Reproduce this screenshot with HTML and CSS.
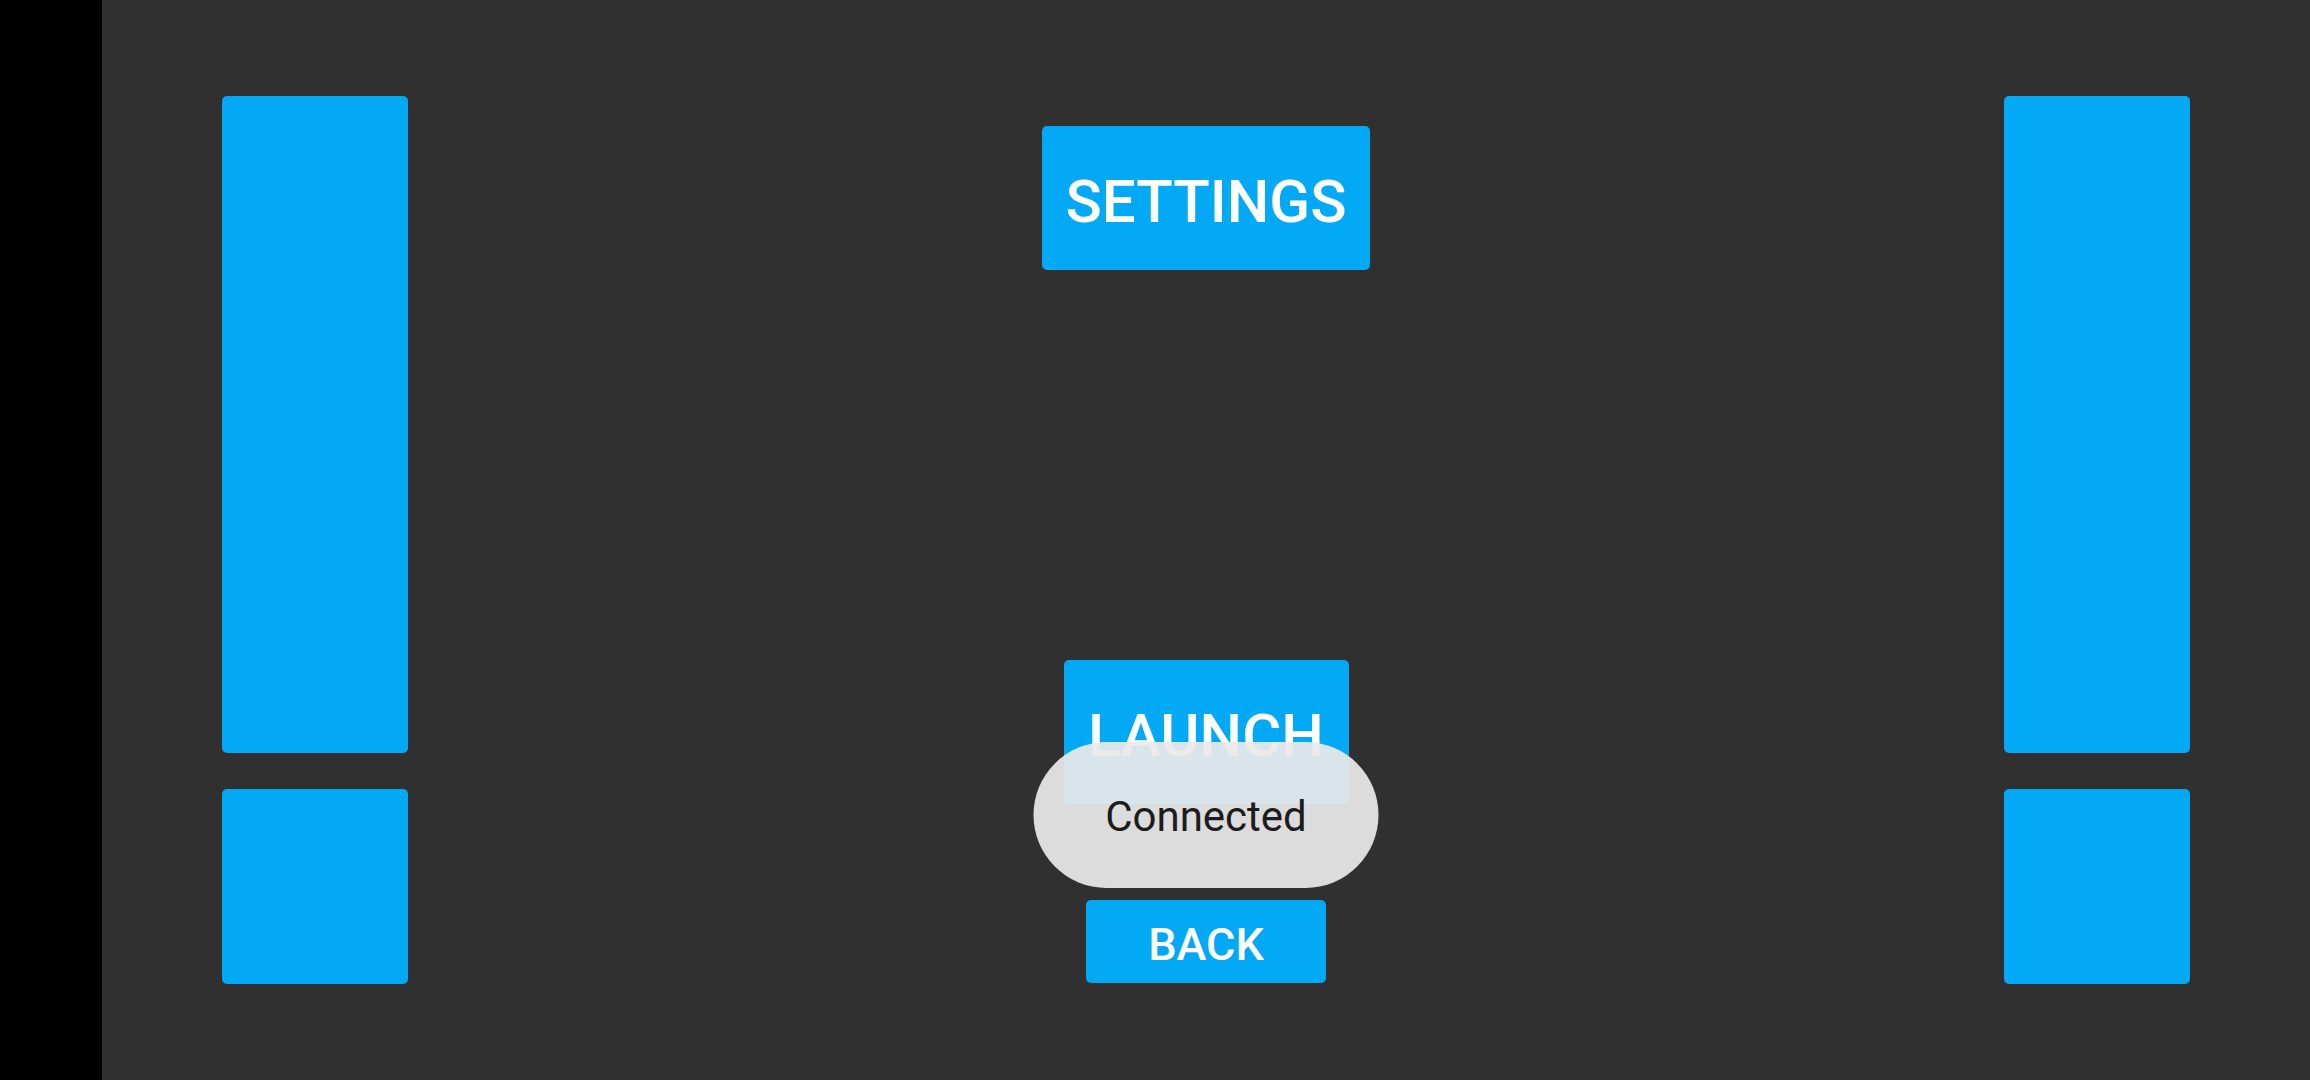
FILE: index.html
```html
<!DOCTYPE html>
<html>
<head>
<meta charset="utf-8">
<link rel="stylesheet" href="styles.css">
</head>
<body>
<div class="side"></div>
<main class="main">
  <div class="col">
    <div class="bar tall"></div>
    <div class="bar small"></div>
  </div>
  <div class="center">
    <div class="btn settings">SETTINGS</div>
    <div class="btn launch">LAUNCH</div>
    <div class="btn back">BACK</div>
    <div class="toast">Connected</div>
  </div>
  <div class="col">
    <div class="bar tall"></div>
    <div class="bar small"></div>
  </div>
</main>
</body>
</html>
```
FILE: styles.css
```css
html, body {
  margin: 0;
  padding: 0;
  width: 2310px;
  height: 1080px;
  overflow: hidden;
}
body {
  display: flex;
  background: #000;
  font-family: Roboto, "Noto Sans", sans-serif;
}
.side {
  width: 102px;
  flex: none;
  background: #000;
}
.main {
  flex: 1;
  background: #303030;
  display: flex;
  justify-content: space-between;
  padding: 96px 120px 0 120px;
  box-sizing: border-box;
}
.col {
  width: 186px;
  display: flex;
  flex-direction: column;
  gap: 36px;
}
.bar {
  background: #03a9f4;
  border-radius: 5px;
}
.tall { height: 657px; }
.small { height: 195px; }
.center {
  position: relative;
  display: flex;
  flex-direction: column;
  align-items: center;
  padding-top: 30px;
}
.btn {
  background: #03a9f4;
  color: #fff;
  border-radius: 5px;
  font-weight: 500;
  display: flex;
  align-items: center;
  justify-content: center;
  box-sizing: border-box;
}
.settings {
  width: 328px;
  height: 144px;
  font-size: 60px;
  padding-top: 6px;
}
.launch {
  width: 285px;
  height: 144px;
  font-size: 60px;
  margin-top: 390px;
  padding-top: 6px;
}
.back {
  width: 240px;
  height: 83px;
  font-size: 45px;
  margin-top: 96px;
  padding-top: 5px;
}
.toast {
  position: absolute;
  top: 646px;
  left: 50%;
  transform: translateX(-50%);
  width: 345px;
  height: 146px;
  border-radius: 73px;
  background: rgba(234, 234, 234, 0.93);
  color: #1c1c1c;
  font-size: 42px;
  display: flex;
  align-items: center;
  justify-content: center;
  padding-top: 2px;
  box-sizing: border-box;
}
```
